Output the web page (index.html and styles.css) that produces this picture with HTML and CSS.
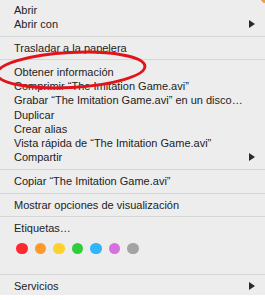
FILE: index.html
```html
<!DOCTYPE html>
<html lang="es">
<head>
<meta charset="utf-8"/>
<meta content="width=device-width, initial-scale=1" name="viewport"/>
<title>Menú contextual</title>
<link rel="stylesheet" href="styles.css">
</head>
<body>
<div class="menu">
  <div class="item">Abrir</div>
  <div class="item sub">Abrir con</div>
  <div class="sep"></div>
  <div class="item">Trasladar a la papelera</div>
  <div class="sep"></div>
  <div class="item">Obtener información</div>
  <div class="item">Comprimir “The Imitation Game.avi”</div>
  <div class="item">Grabar “The Imitation Game.avi” en un disco…</div>
  <div class="item">Duplicar</div>
  <div class="item">Crear alias</div>
  <div class="item">Vista rápida de “The Imitation Game.avi”</div>
  <div class="item sub">Compartir</div>
  <div class="sep"></div>
  <div class="item">Copiar “The Imitation Game.avi”</div>
  <div class="sep"></div>
  <div class="item">Mostrar opciones de visualización</div>
  <div class="sep"></div>
  <div class="item">Etiquetas…</div>
  <div class="tags">
    <span class="dot red"></span>
    <span class="dot orange"></span>
    <span class="dot yellow"></span>
    <span class="dot green"></span>
    <span class="dot blue"></span>
    <span class="dot purple"></span>
    <span class="dot gray"></span>
  </div>
  <div class="sep"></div>
  <div class="item sub">Servicios</div>

  <!-- hand drawn annotation -->
  <svg class="circle" width="160" height="50" viewBox="0 0 160 50">
    <ellipse cx="73" cy="20" rx="74" ry="17.5" transform="rotate(-3 73 20)" fill="none" stroke="#e3131b" stroke-width="3"/>
  </svg>
</div>
<div class="corner"></div>
</body>
</html>
```

FILE: styles.css
```css
body {
  margin: 0;
  background: #fff;
  font-family: "Liberation Sans", Arial, sans-serif;
  overflow: hidden;
}
.menu {
  position: relative;
  width: 275px;
  background: #ededed;
  padding: 3px 0 2px;
  box-shadow: 0 1px 2px rgba(0, 0, 0, 0.35);
  color: #232323;
}
.item {
  height: 14.3px;
  line-height: 14.3px;
  font-size: 11px;
  padding-left: 14px;
  white-space: nowrap;
  position: relative;
}
.item.sub::after {
  content: "";
  position: absolute;
  left: 249px;
  top: 3px;
  border-left: 6px solid #2a2a2a;
  border-top: 4px solid transparent;
  border-bottom: 4px solid transparent;
}
.sep {
  height: 1px;
  background: #d6d6d6;
  margin: 4.2px 0;
}
.tags {
  display: flex;
  gap: 7px;
  padding: 7px 0 0 16px;
  height: 27px;
}
.dot {
  width: 11.5px;
  height: 11.5px;
  border-radius: 50%;
}
.red { background: #fc2a2f; }
.orange { background: #fd9a2a; }
.yellow { background: #fed12d; }
.green { background: #31cc3c; }
.blue { background: #2eb5fa; }
.purple { background: #d86ee0; }
.gray { background: #a3a3a3; }
.circle {
  position: absolute;
  left: -2px;
  top: 50px;
}
.corner {
  position: absolute;
  top: -6px;
  right: -4px;
  width: 8px;
  height: 9px;
  border-radius: 50%;
  background: #f29a3c;
}
```
